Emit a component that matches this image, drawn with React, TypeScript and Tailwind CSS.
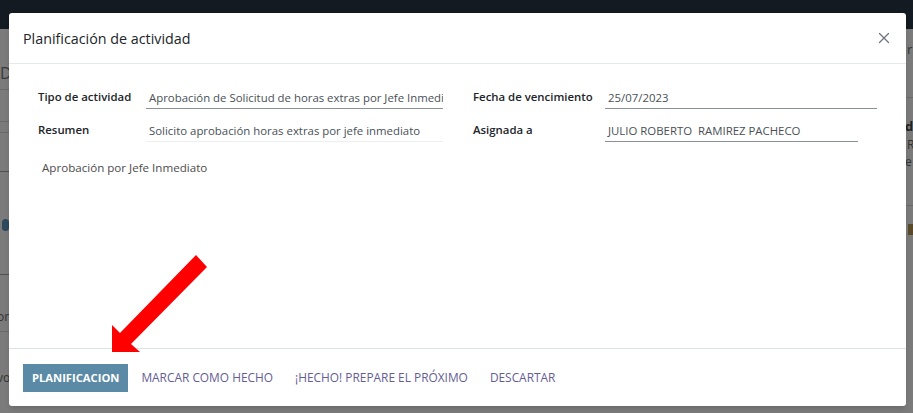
import { X } from "lucide-react";

export default function App() {
  return (
    <div
      className="relative w-[913px] h-[413px] overflow-hidden bg-[#7b7b7b] flex flex-col"
      style={{ fontFamily: '"Open Sans", "Noto Sans", sans-serif' }}
    >
      {/* Page behind the overlay */}
      <div className="h-[29px] shrink-0 bg-[#141a21]" />
      <div className="flex-1 flex justify-between">
        <div className="w-[9px] overflow-hidden flex flex-col leading-none text-[#333]">
          <div className="h-[61px] shrink-0 border-b border-[#6a6a6a] pt-[36px] text-[16px] text-[#3a3a3a]">D</div>
          <div className="h-[32px] shrink-0 border-b border-[#6a6a6a]" />
          <div className="h-[11px] shrink-0 border-b border-[#6a6a6a]" />
          <div className="h-[39px] shrink-0 border-b border-[#505050]" />
          <div className="h-[103px] shrink-0 border-b border-[#505050] pt-[47px] pl-[2px]">
            <div className="w-[7px] h-[12px] rounded-sm bg-[#2e4a5e]" />
          </div>
          <div className="h-[57px] shrink-0 border-b border-[#6a6a6a] pt-[36px] -ml-[3px] text-[12px] whitespace-nowrap">or</div>
          <div className="pt-[40px] -ml-[3px] text-[12px] whitespace-nowrap">vo</div>
        </div>
        <div className="w-[7px] overflow-hidden flex flex-col leading-none text-[#333]">
          <div className="h-[69px] shrink-0 border-b border-[#6a6a6a] pt-[14px] pl-[1px] text-[13px]">r</div>
          <div className="pt-[22px] -ml-[1px] text-[13px] font-bold text-[#222] whitespace-nowrap">de</div>
          <div className="pt-[6px] pl-[1px] text-[12px]">R</div>
          <div className="h-[55px] shrink-0 border-b border-[#6a6a6a] pt-[5px] -ml-[1px] text-[12px]">e</div>
          <div className="mt-[18px] ml-[2px] w-[5px] h-[11px] bg-[#5a4a2a]" />
        </div>
      </div>

      {/* Modal */}
      <div className="absolute left-[9px] top-[13px] w-[897px] h-[393px] bg-white rounded-[3px] shadow-md flex flex-col">
        <div className="h-[51px] flex items-center justify-between pl-[14px] pr-[13px] border-b border-[#e6e9ec]">
          <h4 className="text-[14.3px] font-medium text-[#212529] pt-[1px]">Planificación de actividad</h4>
          <X className="w-[18px] h-[18px] text-[#6c757d]" strokeWidth={1.6} />
        </div>

        <div className="flex-1 pl-[29px] pr-[28px] pt-[23px]">
          <div className="grid grid-cols-2 gap-x-[30px]">
            <div className="flex flex-col gap-[11px]">
              <Field label="Tipo de actividad" labelW="w-[108px]" value="Aprobación de Solicitud de horas extras por Jefe Inmediato" inputW="w-[297px]" strong />
              <Field label="Resumen" labelW="w-[108px]" value="Solicito aprobación horas extras por jefe inmediato" inputW="w-[297px]" />
            </div>
            <div className="flex flex-col gap-[11px]">
              <Field label="Fecha de vencimiento" labelW="w-[132px]" value="25/07/2023" inputW="w-[272px]" strong />
              <Field label="Asignada a" labelW="w-[132px]" value="JULIO ROBERTO  RAMIREZ PACHECO" inputW="w-[253px]" strong />
            </div>
          </div>
          <p className="mt-[17px] ml-[4px] text-[11.6px] text-[#4c4c4c]">Aprobación por Jefe Inmediato</p>
        </div>

        <div className="h-[58px] border-t border-[#dee2e6] flex items-center px-[14px] pt-[1px]">
          <button className="h-[28px] px-[9px] bg-[#5b8aa6] text-white text-[11.2px] font-bold">PLANIFICACION</button>
          <button className="ml-[13px] text-[11.9px] text-[#655c94]">MARCAR COMO HECHO</button>
          <button className="ml-[22px] text-[11.9px] text-[#655c94]">¡HECHO! PREPARE EL PRÓXIMO</button>
          <button className="ml-[22px] text-[11.9px] text-[#655c94]">DESCARTAR</button>
        </div>
      </div>

      {/* Red arrow annotation */}
      <svg className="absolute left-0 top-0" width="913" height="413" viewBox="0 0 913 413">
        <polygon
          points="112,352 112,325 120,333 196,255 207,267 131,344 140,352"
          fill="#ff0000"
        />
      </svg>
    </div>
  );
}

function Field({
  label,
  labelW,
  value,
  inputW,
  strong,
}: {
  label: string;
  labelW: string;
  value: string;
  inputW: string;
  strong?: boolean;
}) {
  return (
    <div className="flex items-start">
      <div className={`${labelW} text-[11.4px] font-semibold text-[#212529] pt-[1px]`}>{label}</div>
      <div
        className={`${inputW} h-[22px] px-[3px] overflow-hidden whitespace-pre text-[11.4px] text-[#495057] border-b ${
          strong ? "border-[#8a9097]" : "border-[#eceef0]"
        } pt-[2px]`}
      >
        {value}
      </div>
    </div>
  );
}
